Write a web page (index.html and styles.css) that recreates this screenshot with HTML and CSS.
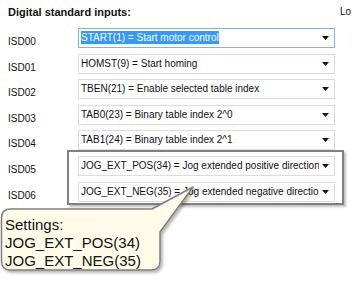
FILE: index.html
```html
<!DOCTYPE html>
<html lang="en-US"><head>
<meta charset="utf-8">
<meta name="viewport" content="width=device-width, initial-scale=1.0">
<link rel="stylesheet" href="styles.css">
<title>Digital standard inputs</title>
</head><body>
<div class="head">
	<h1 class="title">Digital standard inputs:</h1>
	<span class="lo">Lo</span>
</div>

<div class="inputs">
	<span class="lbl">ISD00</span>
	<div class="combo focus"><span class="val"><span class="sel">START(1) = Start motor control</span></span><svg class="arrow" width="7" height="4" viewBox="0 0 7 4"><polygon points="0,0 7,0 3.5,4"/></svg></div>
	<span class="lbl">ISD01</span>
	<div class="combo"><span class="val">HOMST(9) = Start homing</span><svg class="arrow" width="7" height="4" viewBox="0 0 7 4"><polygon points="0,0 7,0 3.5,4"/></svg></div>
	<span class="lbl">ISD02</span>
	<div class="combo"><span class="val">TBEN(21) = Enable selected table index</span><svg class="arrow" width="7" height="4" viewBox="0 0 7 4"><polygon points="0,0 7,0 3.5,4"/></svg></div>
	<span class="lbl">ISD03</span>
	<div class="combo"><span class="val">TAB0(23) = Binary table index 2^0</span><svg class="arrow" width="7" height="4" viewBox="0 0 7 4"><polygon points="0,0 7,0 3.5,4"/></svg></div>
	<span class="lbl">ISD04</span>
	<div class="combo"><span class="val">TAB1(24) = Binary table index 2^1</span><svg class="arrow" width="7" height="4" viewBox="0 0 7 4"><polygon points="0,0 7,0 3.5,4"/></svg></div>
	<span class="lbl">ISD05</span>
	<div class="combo"><span class="val">JOG_EXT_POS(34) = Jog extended positive direction</span><svg class="arrow" width="7" height="4" viewBox="0 0 7 4"><polygon points="0,0 7,0 3.5,4"/></svg></div>
	<span class="lbl">ISD06</span>
	<div class="combo"><span class="val">JOG_EXT_NEG(35) = Jog extended negative direction</span><svg class="arrow" width="7" height="4" viewBox="0 0 7 4"><polygon points="0,0 7,0 3.5,4"/></svg></div>
</div>

<!-- annotation: frame around the two jog inputs -->
<div class="mark"></div>

<!-- annotation: speech bubble -->
<div class="callout">
	<svg class="bubble" width="200" height="92" viewBox="0 0 200 92">
		<defs>
			<filter id="shade" x="-10%" y="-10%" width="130%" height="130%">
				<feDropShadow dx="2" dy="2" stdDeviation="1.5" flood-color="#000" flood-opacity="0.3"/>
			</filter>
		</defs>
		<path d="M10.5 25 H152 L193 3 L160 48 V77 Q160 86 151 86 H10.5 Q1.5 86 1.5 77 V34 Q1.5 25 10.5 25 Z" fill="#fffbe8" stroke="#7f7f7f" stroke-width="1.5" stroke-linejoin="round" filter="url(#shade)"/>
	</svg>
	<div class="note">Settings:<br>JOG_EXT_POS(34)<br>JOG_EXT_NEG(35)</div>
</div>
</body></html>
```
FILE: styles.css
```css
html, body {
	margin : 0 ;
	overflow : hidden ;
	background : #fff ;
	}
body {
	position : relative ;
	width : 352px ;
	height : 287px ;
	font-family : "Liberation Sans", Arial, sans-serif ;
	font-size : 10px ;
	color : #111 ;
	}
.head {
	display : grid ;
	grid-template-columns : 332px auto ;
	padding : 6px 0 0 8px ;
	}
.title {
	margin : 0 ;
	font-size : 11px ;
	line-height : 13px ;
	font-weight : bold ;
	}
.lo {
	white-space : nowrap ;
	line-height : 12px ;
	}
.inputs {
	display : grid ;
	grid-template-columns : 70px 257px ;
	grid-auto-rows : 20px ;
	row-gap : 5.6px ;
	margin : 9px 0 0 8px ;
	}
.lbl {
	padding-top : 8px ;
	line-height : 12px ;
	}
.combo {
	box-sizing : border-box ;
	height : 20px ;
	display : flex ;
	align-items : center ;
	gap : 3px ;
	padding : 0 5px 0 2px ;
	border : 1px solid #dcdcdc ;
	background : #fff ;
	}
.combo.focus {
	border-color : #7eb4ea ;
	}
.val {
	flex : 1 ;
	overflow : hidden ;
	white-space : nowrap ;
	line-height : 14px ;
	}
.sel {
	background : #3399ff ;
	color : #fff ;
	padding : 1px 0 ;
	}
.arrow {
	flex : none ;
	fill : #111 ;
	}
.mark {
	position : absolute ;
	left : 67px ;
	top : 150px ;
	width : 273px ;
	height : 51px ;
	border : 2px solid #808080 ;
	box-shadow : 2px 2px 2px rgba( 0, 0, 0, 0.25 ) ;
	}
.callout {
	position : absolute ;
	left : 0 ;
	top : 184px ;
	width : 200px ;
	height : 92px ;
	}
.bubble {
	position : absolute ;
	left : 0 ;
	top : 0 ;
	}
.note {
	position : absolute ;
	left : 5px ;
	top : 32px ;
	font-size : 15px ;
	line-height : 18px ;
	color : #111 ;
	}
```
